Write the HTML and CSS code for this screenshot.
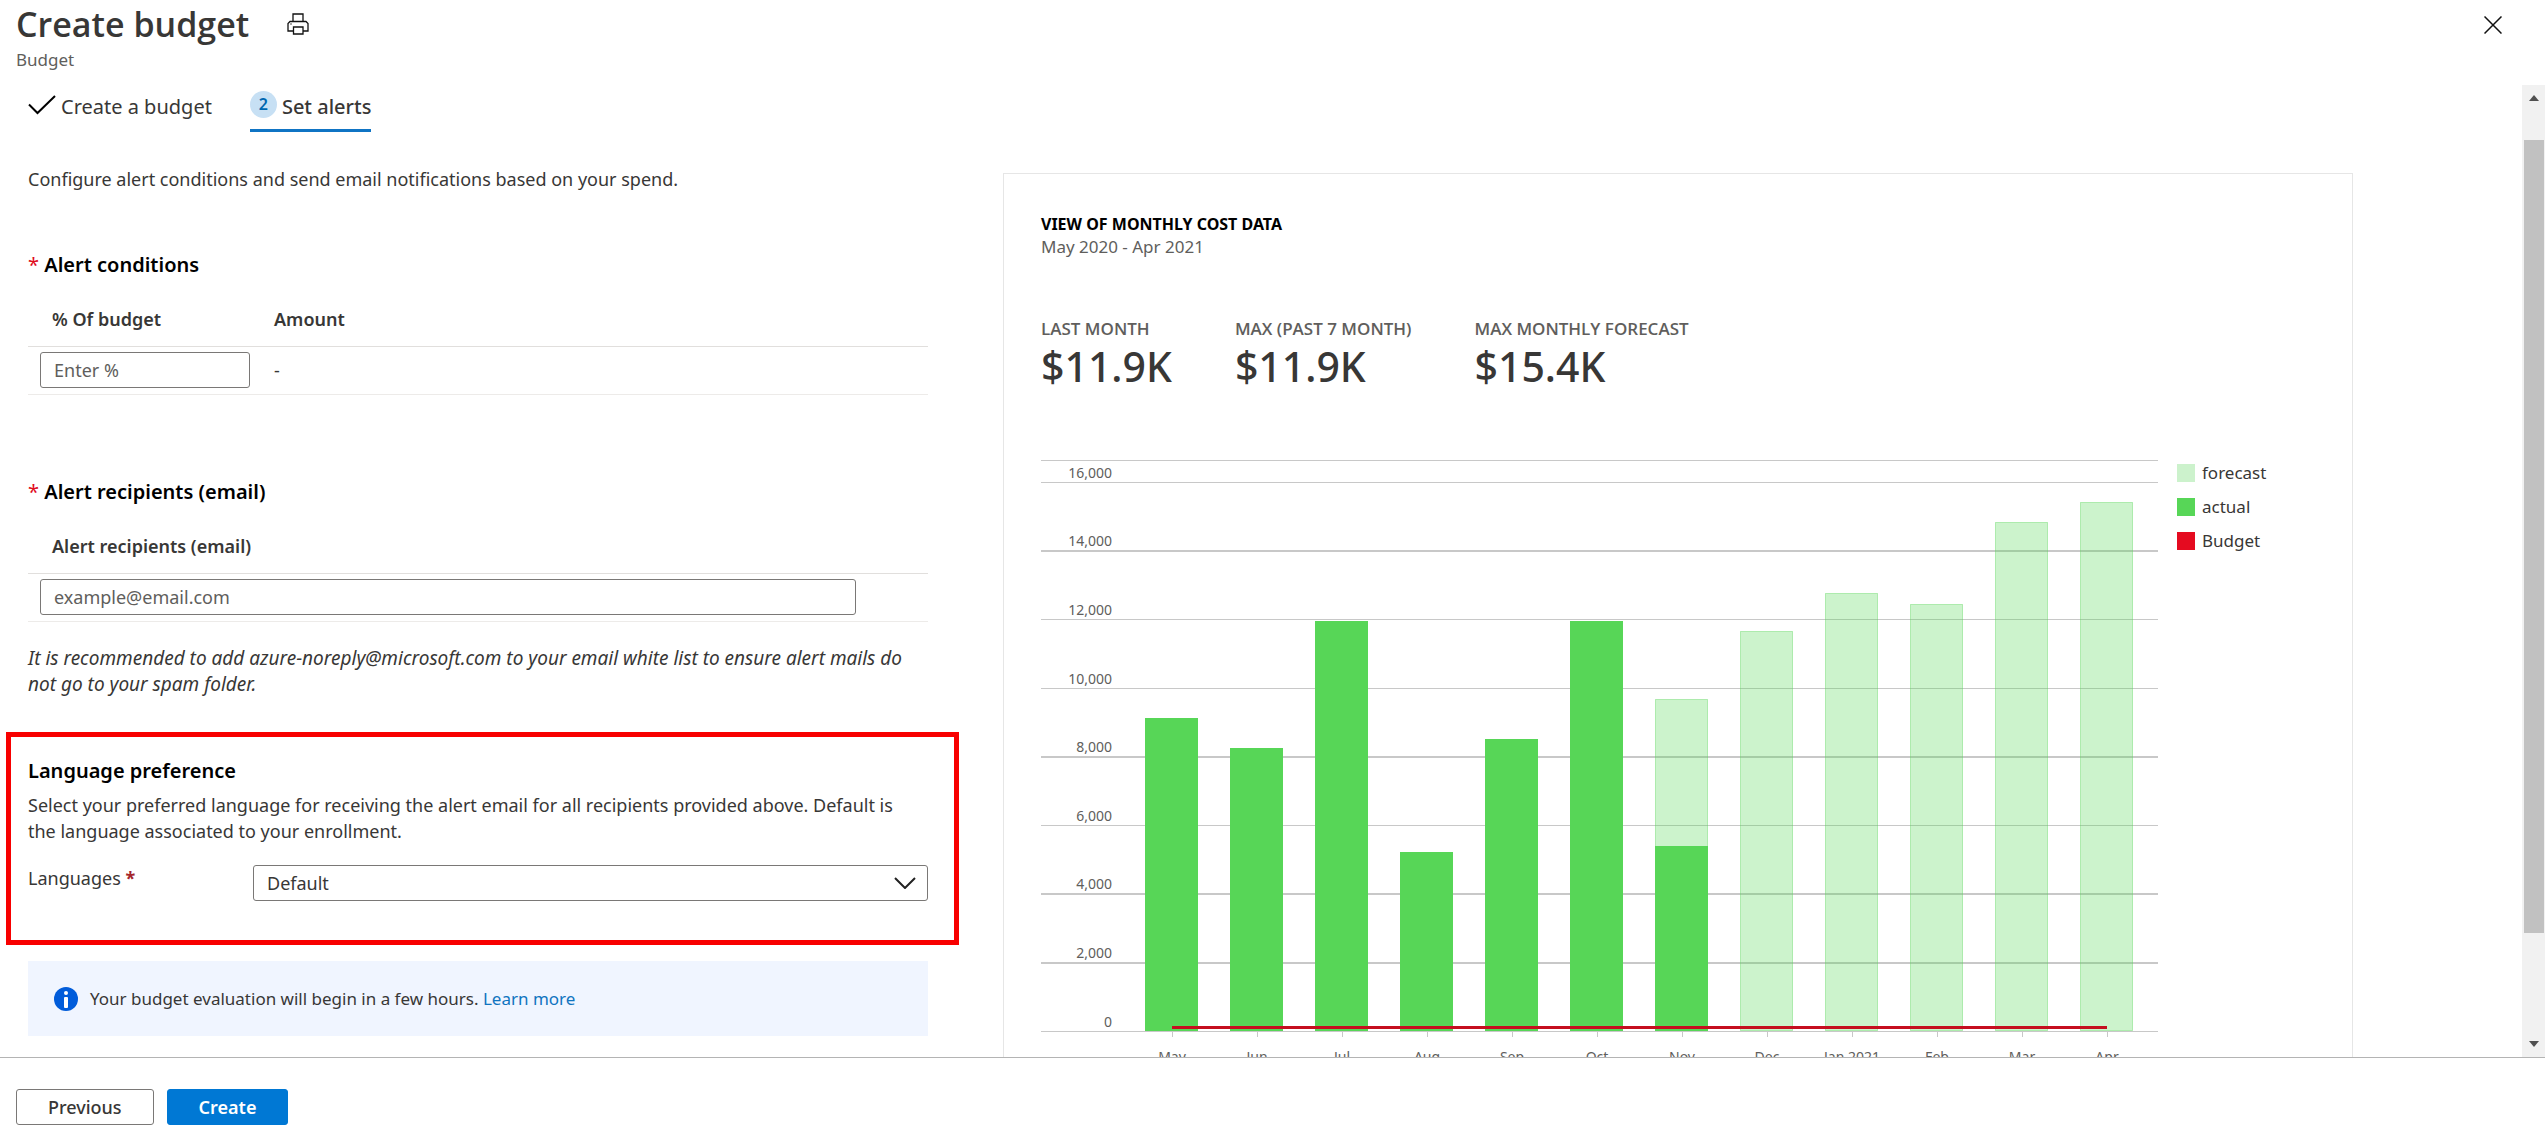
FILE: index.html
```html
<!DOCTYPE html>
<html lang="en">
<head>
<meta charset="utf-8">
<meta name="viewport" content="width=device-width, initial-scale=1">
<title>Create budget</title>
<link rel="stylesheet" href="styles.css">
</head>
<body>
<header class="blade-header">
  <div class="blade-titles">
    <div class="title-row">
      <h1 class="blade-title">Create budget</h1>
      <button class="icon-button" type="button" aria-label="Print">
        <svg width="22" height="22" viewBox="0 0 22 22" fill="none" stroke="#111" stroke-width="1.3">
          <path d="M6 8.500V1h10v7.500M6 18H1V10.500l2-2h16l2 2V18h-5M6.500 14h9.500v7H6.500zM3.500 11h1"/>
        </svg>
      </button>
    </div>
    <p class="blade-subtitle">Budget</p>
  </div>
  <button class="icon-button close-button" type="button" aria-label="Close">
    <svg width="18" height="18" viewBox="0 0 18 18" stroke="#111" stroke-width="1.500"><path d="M0.500 0.500l17 17M17.500 0.500l-17 17"/></svg>
  </button>
</header>

<div class="scroll-area">
  <main class="content">
    <nav class="tabs" aria-label="Steps">
      <button class="tab" type="button">
        <svg class="tab-check" width="28" height="20" viewBox="0 0 28 20" fill="none" stroke="#000" stroke-width="2"><path d="M1 9.500l8.500 8.500L27 1"/></svg>
        <span class="tab-label">Create a budget</span>
      </button>
      <button class="tab tab-active" type="button">
        <span class="tab-number">2</span>
        <span class="tab-label">Set alerts</span>
      </button>
    </nav>

    <div class="columns">
      <form class="form">
        <p class="intro">Configure alert conditions and send email notifications based on your spend.</p>

        <h2 class="section-title"><span class="required">*</span> Alert conditions</h2>
        <table class="grid-table">
          <thead><tr><th class="percent-column" scope="col">% Of budget</th><th scope="col">Amount</th></tr></thead>
          <tbody><tr><td><input class="text-box" type="text" placeholder="Enter %" aria-label="% Of budget"></td><td class="amount">-</td></tr></tbody>
        </table>

        <h2 class="section-title section-recipients"><span class="required">*</span> Alert recipients (email)</h2>
        <table class="grid-table">
          <thead><tr><th scope="col">Alert recipients (email)</th></tr></thead>
          <tbody><tr><td class="email-cell"><input class="text-box" type="email" placeholder="example@email.com" aria-label="Alert recipients (email)"></td></tr></tbody>
        </table>

        <p class="note">It is recommended to add azure-noreply@microsoft.com to your email white list to ensure alert mails do not go to your spam folder.</p>

        <section class="language">
          <h3 class="language-title">Language preference</h3>
          <p class="language-text">Select your preferred language for receiving the alert email for all recipients provided above. Default is the language associated to your enrollment.</p>
          <div class="field">
            <label for="languages">Languages <span class="required-dark">*</span></label>
            <div class="select-wrap">
              <select id="languages" class="select"><option>Default</option></select>
              <svg class="chevron" width="22" height="12" viewBox="0 0 22 12" fill="none" stroke="#222" stroke-width="2"><path d="M1 1l10 10L21 1"/></svg>
            </div>
          </div>
        </section>

        <div class="info">
          <svg width="24" height="24" viewBox="0 0 24 24"><circle cx="12" cy="12" r="12" fill="#015cda"/><circle cx="12" cy="6" r="2" fill="#fff"/><rect x="10" y="10" width="4" height="11" rx="1" fill="#fff"/></svg>
          <p>Your budget evaluation will begin in a few hours. <a href="#">Learn more</a></p>
        </div>
      </form>

      <section class="card">
        <h2 class="card-title">VIEW OF MONTHLY COST DATA</h2>
        <p class="card-range">May 2020 - Apr 2021</p>
        <dl class="stats">
          <div><dt>LAST MONTH</dt><dd>$11.9K</dd></div>
          <div><dt>MAX (PAST 7 MONTH)</dt><dd>$11.9K</dd></div>
          <div><dt>MAX MONTHLY FORECAST</dt><dd>$15.4K</dd></div>
        </dl>
        <div class="chart-row">
          <svg class="chart" viewBox="0 0 1117 640" role="img" aria-label="Monthly cost">
            <g class="gridlines">
              <path class="thin" d="M0 1.500H1117M0 23.500H1117M0 160.500H1117M0 229.500H1117M0 366.500H1117"/>
              <path class="thick" d="M0 92H1117M0 298H1117M0 435H1117M0 504H1117"/>
              <path class="thin" d="M0 572.500H1117"/>
              <path class="thin" d="M131.500 573v5M216.500 573v5M301.500 573v5M386.500 573v5M471.500 573v5M556.500 573v5M641.500 573v5M726.500 573v5M811.500 573v5M896.500 573v5M981.500 573v5M1066.500 573v5"/>
            </g>
            <g class="forecast">
              <rect x="614.500" y="240.500" width="52" height="331"/>
              <rect x="699.500" y="172.500" width="52" height="399"/>
              <rect x="784.500" y="134.500" width="52" height="437"/>
              <rect x="869.500" y="145.500" width="52" height="426"/>
              <rect x="954.500" y="63.500" width="52" height="508"/>
              <rect x="1039.500" y="43.500" width="52" height="528"/>
            </g>
            <g class="actual">
              <rect x="104" y="259" width="53" height="313"/>
              <rect x="189" y="289" width="53" height="283"/>
              <rect x="274" y="162" width="53" height="410"/>
              <rect x="359" y="393" width="53" height="179"/>
              <rect x="444" y="280" width="53" height="292"/>
              <rect x="529" y="162" width="53" height="410"/>
              <rect x="614" y="387" width="53" height="185"/>
            </g>
            <path class="budget" d="M131 568.500H1066"/>
            <g class="axis axis-y">
              <text x="71" y="19">16,000</text><text x="71" y="87">14,000</text><text x="71" y="156">12,000</text>
              <text x="71" y="225">10,000</text><text x="71" y="293">8,000</text><text x="71" y="362">6,000</text>
              <text x="71" y="430">4,000</text><text x="71" y="499">2,000</text><text x="71" y="568">0</text>
            </g>
            <g class="axis axis-x">
              <text x="131" y="603">May</text><text x="216" y="603">Jun</text><text x="301" y="603">Jul</text>
              <text x="386" y="603">Aug</text><text x="471" y="603">Sep</text><text x="556" y="603">Oct</text>
              <text x="641" y="603">Nov</text><text x="726" y="603">Dec</text><text x="811" y="603">Jan 2021</text>
              <text x="896" y="603">Feb</text><text x="981" y="603">Mar</text><text x="1066" y="603">Apr</text>
            </g>
          </svg>
          <ul class="legend">
            <li><span class="swatch swatch-forecast"></span>forecast</li>
            <li><span class="swatch swatch-actual"></span>actual</li>
            <li><span class="swatch swatch-budget"></span>Budget</li>
          </ul>
        </div>
      </section>
    </div>
  </main>
  <div class="scrollbar" aria-hidden="true">
    <svg width="10" height="6" viewBox="0 0 10 6"><path d="M5 0l5 6H0z" fill="#505050"/></svg>
    <div class="scroll-track"><div class="scroll-thumb"></div></div>
    <svg width="10" height="6" viewBox="0 0 10 6"><path d="M0 0h10L5 6z" fill="#505050"/></svg>
  </div>
</div>

<footer class="footer">
  <button class="button" type="button">Previous</button>
  <button class="button button-primary" type="button">Create</button>
</footer>
</body>
</html>
```
FILE: styles.css
```css
* { box-sizing: border-box; }

body {
  margin: 0;
  height: 100vh;
  display: flex;
  flex-direction: column;
  overflow: hidden;
  background: #fff;
  color: #383736;
  font: 18px/26px "Noto Sans", "Open Sans", sans-serif;
}

h1, h2, h3, p, dl, dd, ul { margin: 0; padding: 0; }
button, input, select { font: inherit; color: inherit; }

.blade-header {
  display: flex;
  justify-content: space-between;
  align-items: flex-start;
  height: 85px;
  flex: none;
  padding: 0 43px 0 16px;
}
.title-row { display: flex; align-items: center; gap: 38px; height: 48px; }
.blade-title { font: 600 34px/48px "Open Sans", sans-serif; }
.blade-subtitle { font-size: 17px; line-height: 24px; color: #605e5c; }
.icon-button { display: flex; padding: 0; border: 0; background: none; }
.close-button { margin-top: 16px; }

.scroll-area { flex: 1; min-height: 0; display: flex; overflow: hidden; }
.content { flex: 1; min-width: 0; overflow: hidden; padding: 6px 169px 0 28px; }

.tabs { display: flex; gap: 38px; }
.tab {
  display: flex;
  align-items: flex-start;
  gap: 5px;
  padding: 0 0 9px;
  border: 0;
  border-bottom: 3px solid transparent;
  background: none;
  font-size: 20px;
}
.tab-check { margin-top: 4px; }
.tab-label { margin-top: 3px; }
.tab-active { border-bottom-color: #0f74c4; font-weight: 500; }
.tab-number {
  width: 27px;
  height: 27px;
  border-radius: 50%;
  background: #c7e0f4;
  color: #0067b0;
  font-size: 16px;
  font-weight: 600;
  line-height: 26px;
  text-align: center;
}

.columns { display: grid; grid-template-columns: 2fr 3fr; gap: 75px; }
.form { min-width: 0; }
.intro { margin-top: 34px; }
.section-title { margin-top: 60px; font-size: 20px; line-height: 26px; font-weight: 600; color: #000; }
.section-recipients { margin-top: 84px; }
.required { color: #e00b1c; font-weight: 400; }
.required-dark { color: #a4262c; font-weight: 700; }

.grid-table { width: 100%; table-layout: fixed; border-collapse: separate; border-spacing: 0; }
.grid-table th { padding: 28px 0 14px 24px; border-bottom: 1px solid #e1dfdd; text-align: left; font-weight: 600; }
.grid-table td { padding: 5px 0 6px 12px; border-bottom: 1px solid #edebe9; }
.grid-table .percent-column { width: 222px; }
.grid-table .amount { padding-left: 24px; }
.grid-table .email-cell { padding-right: 72px; }
.text-box {
  display: block;
  width: 100%;
  height: 36px;
  padding: 0 13px;
  border: 1px solid #7a7876;
  border-radius: 3px;
  background: #fff;
}
.text-box::placeholder { color: #605e5c; opacity: 1; }

.note { margin-top: 23px; padding-right: 24px; font-size: 19px; font-style: italic; }

.language { margin: 35px -31px 0 -22px; padding: 21px 26px 39px 17px; border: 5px solid #f80000; }
.language-title { font-size: 20px; line-height: 26px; font-weight: 600; color: #000; }
.language-text { margin-top: 8px; padding-right: 20px; }
.field { display: grid; grid-template-columns: 225px 1fr; margin-top: 21px; }
.select-wrap { display: grid; align-items: center; }
.select {
  grid-area: 1 / 1;
  width: 100%;
  height: 36px;
  padding: 0 40px 0 13px;
  border: 1px solid #7a7876;
  border-radius: 3px;
  background: #fff;
  appearance: none;
}
.chevron { grid-area: 1 / 1; justify-self: end; margin-right: 12px; pointer-events: none; }

.info { display: flex; align-items: center; gap: 12px; min-height: 75px; margin-top: 16px; padding: 0 26px; background: #f0f5ff; font-size: 17px; }
.info a { color: #0f74c0; text-decoration: none; }

.card { min-width: 0; margin-top: 41px; padding: 38px 0 0 37px; border: 1px solid #e6e6e6; }
.card-title { font-size: 16px; line-height: 24px; font-weight: 700; color: #000; }
.card-range { font-size: 17px; line-height: 22px; color: #605e5c; }
.stats { display: flex; gap: 63px; margin-top: 61px; }
.stats dt { font: 600 17px/20px "Open Sans", sans-serif; color: #605e5c; }
.stats dd { font-size: 41px; line-height: 54px; font-weight: 500; }

.chart-row { display: flex; align-items: flex-start; gap: 19px; margin-top: 66px; }
.chart { flex: 1; min-width: 0; display: block; }
.gridlines { fill: none; stroke: #c8c8c8; }
.thin { stroke-width: 1; }
.thick { stroke-width: 2; }
.forecast { fill: #57d657; fill-opacity: 0.3; stroke: #57d657; stroke-opacity: 0.4; }
.actual { fill: #57d657; }
.budget { fill: none; stroke: #c50f1f; stroke-width: 3; }
.axis { font-size: 14px; fill: #605e5c; }
.axis-y { text-anchor: end; }
.axis-x { text-anchor: middle; }

.legend { width: 175px; margin-top: 1px; list-style: none; display: grid; gap: 8px; font-size: 17px; }
.legend li { display: flex; align-items: center; gap: 7px; }
.swatch { width: 18px; height: 18px; }
.swatch-forecast { background: #ccf2cc; }
.swatch-actual { background: #57d657; }
.swatch-budget { background: #e50b20; }

.scrollbar { display: flex; flex-direction: column; align-items: center; gap: 39px; width: 23px; padding: 10px 0; background: #f1f1f1; }
.scroll-track { flex: 1; width: 20px; }
.scroll-thumb { height: 92%; background: #c1c1c1; }

.footer { flex: none; display: flex; gap: 13px; padding: 31px 16px 21px; border-top: 1px solid #b4b4b4; }
.button { height: 36px; min-width: 120px; padding: 0 31px; border: 1px solid #7a7876; border-radius: 3px; background: #fff; font-weight: 500; }
.button-primary { border-color: #0078d4; background: #0078d4; color: #fff; font-weight: 600; }
```
